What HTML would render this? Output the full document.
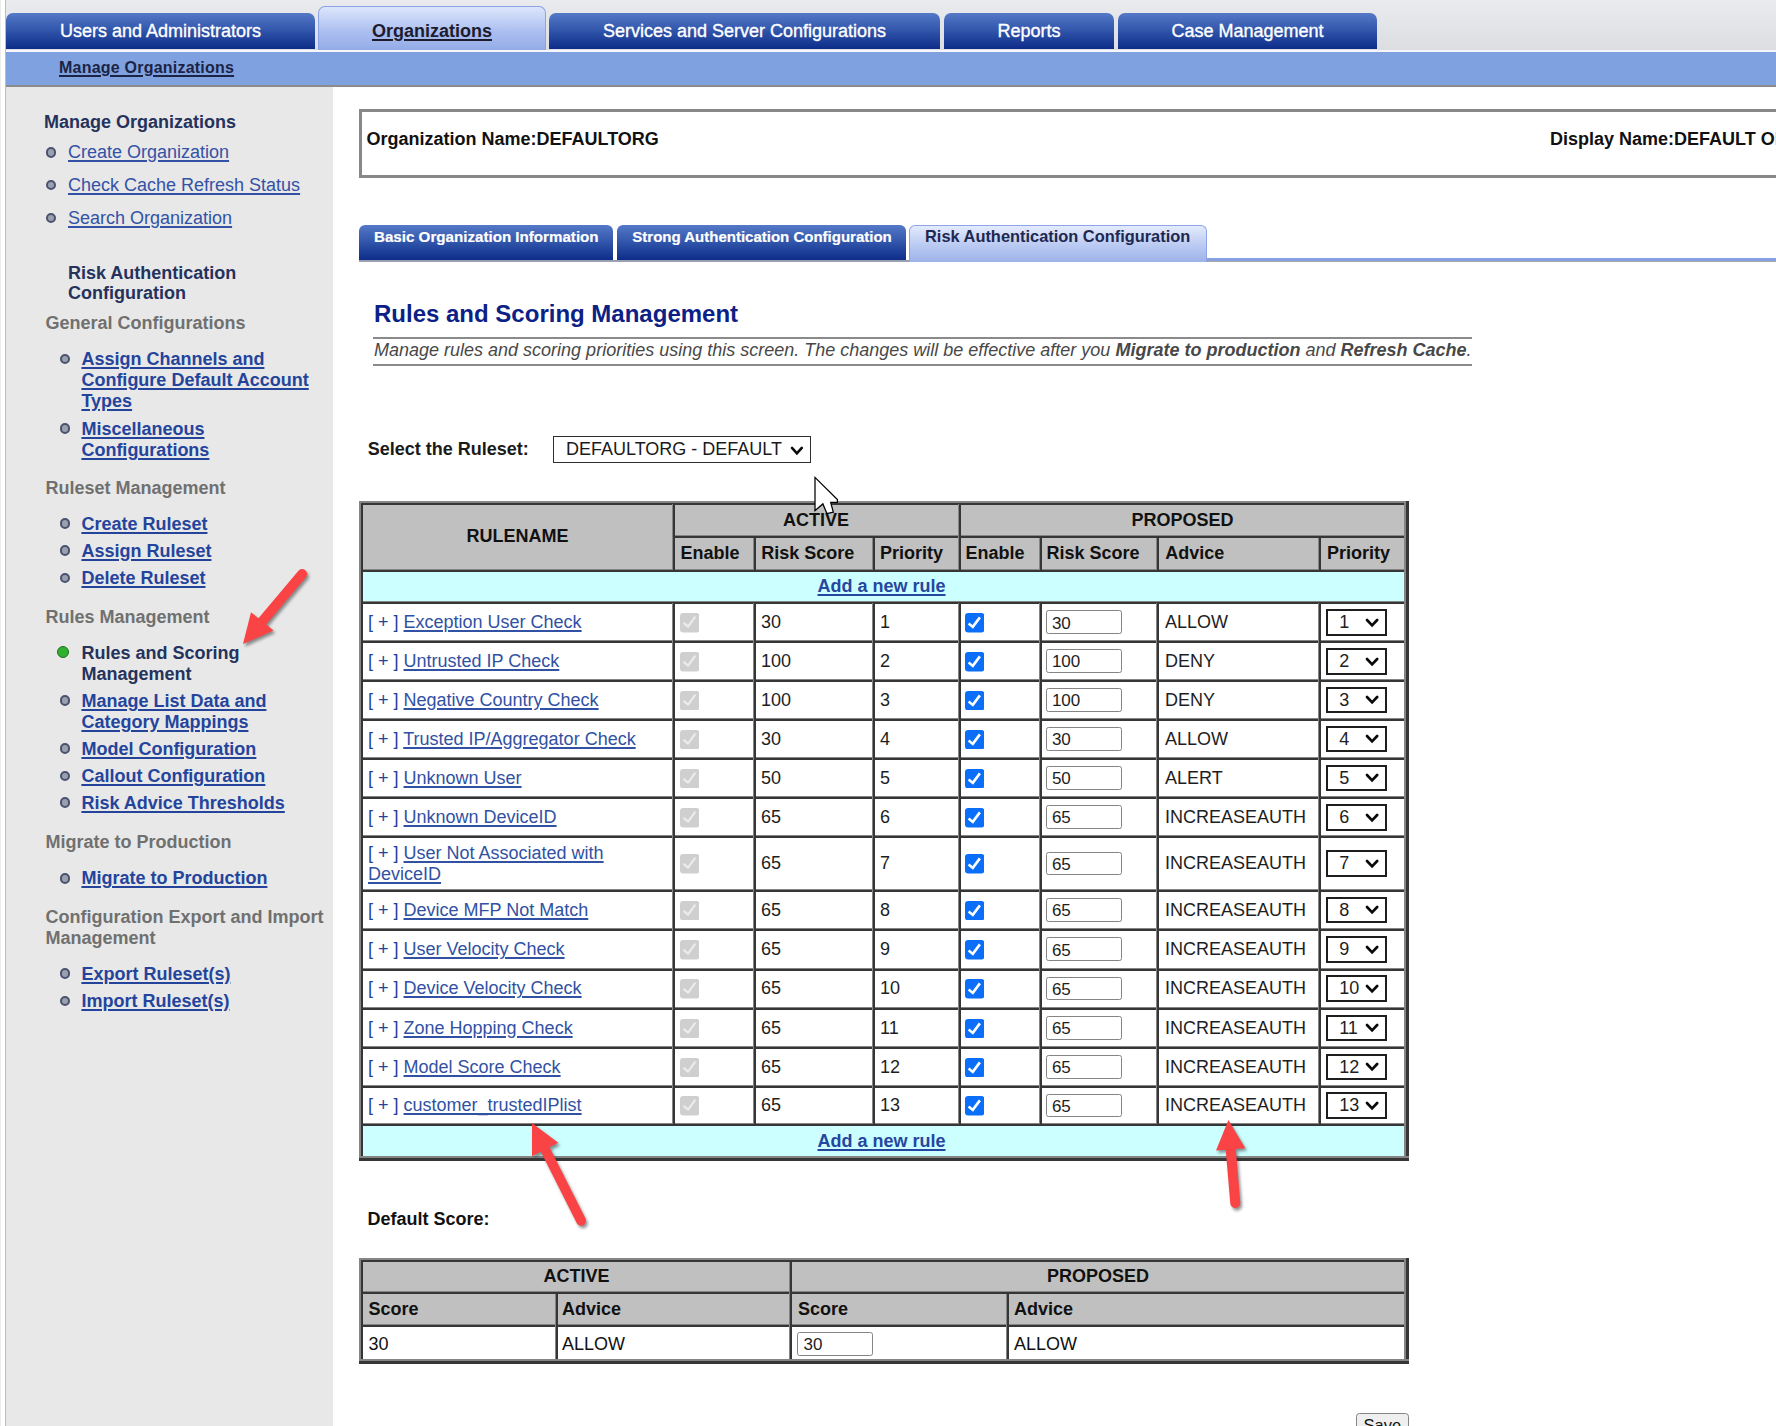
<!DOCTYPE html><html><head><meta charset="utf-8"><style>
html,body{margin:0;padding:0;}
body{width:1776px;height:1426px;overflow:hidden;position:relative;background:#fff;font-family:"Liberation Sans", sans-serif;}
div{box-sizing:border-box;}
u{text-decoration:underline;text-decoration-thickness:1.5px;text-underline-offset:1.6px;}
</style></head><body>
<div style="position:absolute;left:0.00px;top:0.00px;width:1.00px;height:1426.00px;background:#ececec;"></div>
<div style="position:absolute;left:1.00px;top:0.00px;width:4.00px;height:1426.00px;background:#ffffff;"></div>
<div style="position:absolute;left:5.00px;top:0.00px;width:1.00px;height:1426.00px;background:#bdbdbd;"></div>
<div style="position:absolute;left:6.00px;top:0.00px;width:1770.00px;height:52.00px;background:linear-gradient(#eaebef,#dcdde1);"></div>
<div style="position:absolute;left:6.00px;top:49.50px;width:1770.00px;height:2.50px;background:#f5f5fb;"></div>
<div style="position:absolute;left:6.00px;top:52.00px;width:1770.00px;height:33.00px;background:#80a1e0;"></div>
<div style="position:absolute;left:6.00px;top:85.00px;width:1770.00px;height:1.50px;background:#8c8c8c;"></div>
<div style="position:absolute;left:6px;top:13px;width:309px;height:36px;border-radius:7px 7px 0 0;background:linear-gradient(#5479c7,#3358ad 45%,#0d2c89);"></div>
<div style="position:absolute;left:6.00px;top:21.00px;width:309px;text-align:center;font-size:18px;line-height:20px;font-weight:normal;font-style:normal;color:#ffffff;white-space:nowrap;-webkit-text-stroke:0.35px #fff;">Users and Administrators</div>
<div style="position:absolute;left:318px;top:5.5px;width:228px;height:44px;border:1px solid #8aa2e6;border-bottom:none;border-radius:7px 7px 0 0;background:linear-gradient(#dce6fb,#aabdf0 60%,#93ace6);"></div>
<div style="position:absolute;left:318.00px;top:21.00px;width:228px;text-align:center;font-size:18px;line-height:20px;font-weight:bold;font-style:normal;color:#1c1c2c;white-space:nowrap;"><u style="text-decoration-thickness:1.5px">Organizations</u></div>
<div style="position:absolute;left:549px;top:13px;width:391px;height:36px;border-radius:7px 7px 0 0;background:linear-gradient(#5479c7,#3358ad 45%,#0d2c89);"></div>
<div style="position:absolute;left:549.00px;top:21.00px;width:391px;text-align:center;font-size:18px;line-height:20px;font-weight:normal;font-style:normal;color:#ffffff;white-space:nowrap;-webkit-text-stroke:0.35px #fff;">Services and Server Configurations</div>
<div style="position:absolute;left:944px;top:13px;width:170px;height:36px;border-radius:7px 7px 0 0;background:linear-gradient(#5479c7,#3358ad 45%,#0d2c89);"></div>
<div style="position:absolute;left:944.00px;top:21.00px;width:170px;text-align:center;font-size:18px;line-height:20px;font-weight:normal;font-style:normal;color:#ffffff;white-space:nowrap;-webkit-text-stroke:0.35px #fff;">Reports</div>
<div style="position:absolute;left:1118px;top:13px;width:259px;height:36px;border-radius:7px 7px 0 0;background:linear-gradient(#5479c7,#3358ad 45%,#0d2c89);"></div>
<div style="position:absolute;left:1118.00px;top:21.00px;width:259px;text-align:center;font-size:18px;line-height:20px;font-weight:normal;font-style:normal;color:#ffffff;white-space:nowrap;-webkit-text-stroke:0.35px #fff;">Case Management</div>
<div style="position:absolute;left:59.00px;top:59.00px;font-size:16px;line-height:17px;font-weight:bold;font-style:normal;color:#1b2444;white-space:nowrap;letter-spacing:0.22px;"><u>Manage Organizations</u></div>
<div style="position:absolute;left:6.00px;top:86.50px;width:327.00px;height:1339.50px;background:#e8e8e8;"></div>
<div style="position:absolute;left:44.00px;top:112.00px;font-size:18px;line-height:20px;font-weight:bold;font-style:normal;color:#24325c;white-space:nowrap;">Manage Organizations</div>
<div style="position:absolute;left:45.95px;top:147.05px;width:10.5px;height:10.5px;border-radius:50%;background:#9aa0ad;border:2px solid #4a5270;"></div>
<div style="position:absolute;left:68.00px;top:142.30px;font-size:18px;line-height:20px;font-weight:normal;font-style:normal;color:#3352a6;white-space:nowrap;"><u>Create Organization</u></div>
<div style="position:absolute;left:45.95px;top:179.95px;width:10.5px;height:10.5px;border-radius:50%;background:#9aa0ad;border:2px solid #4a5270;"></div>
<div style="position:absolute;left:68.00px;top:175.20px;font-size:18px;line-height:20px;font-weight:normal;font-style:normal;color:#3352a6;white-space:nowrap;"><u>Check Cache Refresh Status</u></div>
<div style="position:absolute;left:45.95px;top:212.95px;width:10.5px;height:10.5px;border-radius:50%;background:#9aa0ad;border:2px solid #4a5270;"></div>
<div style="position:absolute;left:68.00px;top:208.20px;font-size:18px;line-height:20px;font-weight:normal;font-style:normal;color:#3352a6;white-space:nowrap;"><u>Search Organization</u></div>
<div style="position:absolute;left:68.00px;top:262.70px;font-size:18px;line-height:20px;font-weight:bold;font-style:normal;color:#24325c;white-space:nowrap;">Risk Authentication</div>
<div style="position:absolute;left:68.00px;top:283.40px;font-size:18px;line-height:20px;font-weight:bold;font-style:normal;color:#24325c;white-space:nowrap;">Configuration</div>
<div style="position:absolute;left:45.50px;top:313.00px;font-size:18px;line-height:20px;font-weight:bold;font-style:normal;color:#707070;white-space:nowrap;">General Configurations</div>
<div style="position:absolute;left:59.75px;top:353.75px;width:10.5px;height:10.5px;border-radius:50%;background:#9aa0ad;border:2px solid #4a5270;"></div>
<div style="position:absolute;left:81.40px;top:348.90px;font-size:18px;line-height:20px;font-weight:bold;font-style:normal;color:#24449c;white-space:nowrap;"><u>Assign Channels and</u></div>
<div style="position:absolute;left:81.40px;top:370.00px;font-size:18px;line-height:20px;font-weight:bold;font-style:normal;color:#24449c;white-space:nowrap;"><u>Configure Default Account</u></div>
<div style="position:absolute;left:81.40px;top:391.00px;font-size:18px;line-height:20px;font-weight:bold;font-style:normal;color:#24449c;white-space:nowrap;"><u>Types</u></div>
<div style="position:absolute;left:59.75px;top:423.45px;width:10.5px;height:10.5px;border-radius:50%;background:#9aa0ad;border:2px solid #4a5270;"></div>
<div style="position:absolute;left:81.40px;top:418.70px;font-size:18px;line-height:20px;font-weight:bold;font-style:normal;color:#24449c;white-space:nowrap;"><u>Miscellaneous</u></div>
<div style="position:absolute;left:81.40px;top:439.70px;font-size:18px;line-height:20px;font-weight:bold;font-style:normal;color:#24449c;white-space:nowrap;"><u>Configurations</u></div>
<div style="position:absolute;left:45.50px;top:478.00px;font-size:18px;line-height:20px;font-weight:bold;font-style:normal;color:#707070;white-space:nowrap;">Ruleset Management</div>
<div style="position:absolute;left:59.75px;top:518.45px;width:10.5px;height:10.5px;border-radius:50%;background:#9aa0ad;border:2px solid #4a5270;"></div>
<div style="position:absolute;left:81.40px;top:513.70px;font-size:18px;line-height:20px;font-weight:bold;font-style:normal;color:#24449c;white-space:nowrap;"><u>Create Ruleset</u></div>
<div style="position:absolute;left:59.75px;top:545.25px;width:10.5px;height:10.5px;border-radius:50%;background:#9aa0ad;border:2px solid #4a5270;"></div>
<div style="position:absolute;left:81.40px;top:540.50px;font-size:18px;line-height:20px;font-weight:bold;font-style:normal;color:#24449c;white-space:nowrap;"><u>Assign Ruleset</u></div>
<div style="position:absolute;left:59.75px;top:572.95px;width:10.5px;height:10.5px;border-radius:50%;background:#9aa0ad;border:2px solid #4a5270;"></div>
<div style="position:absolute;left:81.40px;top:568.20px;font-size:18px;line-height:20px;font-weight:bold;font-style:normal;color:#24449c;white-space:nowrap;"><u>Delete Ruleset</u></div>
<div style="position:absolute;left:45.50px;top:606.50px;font-size:18px;line-height:20px;font-weight:bold;font-style:normal;color:#707070;white-space:nowrap;">Rules Management</div>
<div style="position:absolute;left:56.70px;top:645.70px;width:12.6px;height:12.6px;border-radius:50%;background:#2fb02f;border:1.8px solid #1f6f1f;"></div>
<div style="position:absolute;left:81.40px;top:643.00px;font-size:18px;line-height:20px;font-weight:bold;font-style:normal;color:#24325c;white-space:nowrap;">Rules and Scoring</div>
<div style="position:absolute;left:81.40px;top:664.00px;font-size:18px;line-height:20px;font-weight:bold;font-style:normal;color:#24325c;white-space:nowrap;">Management</div>
<div style="position:absolute;left:59.75px;top:695.45px;width:10.5px;height:10.5px;border-radius:50%;background:#9aa0ad;border:2px solid #4a5270;"></div>
<div style="position:absolute;left:81.40px;top:690.70px;font-size:18px;line-height:20px;font-weight:bold;font-style:normal;color:#24449c;white-space:nowrap;"><u>Manage List Data and</u></div>
<div style="position:absolute;left:81.40px;top:711.80px;font-size:18px;line-height:20px;font-weight:bold;font-style:normal;color:#24449c;white-space:nowrap;"><u>Category Mappings</u></div>
<div style="position:absolute;left:59.75px;top:743.45px;width:10.5px;height:10.5px;border-radius:50%;background:#9aa0ad;border:2px solid #4a5270;"></div>
<div style="position:absolute;left:81.40px;top:738.70px;font-size:18px;line-height:20px;font-weight:bold;font-style:normal;color:#24449c;white-space:nowrap;"><u>Model Configuration</u></div>
<div style="position:absolute;left:59.75px;top:770.95px;width:10.5px;height:10.5px;border-radius:50%;background:#9aa0ad;border:2px solid #4a5270;"></div>
<div style="position:absolute;left:81.40px;top:766.20px;font-size:18px;line-height:20px;font-weight:bold;font-style:normal;color:#24449c;white-space:nowrap;"><u>Callout Configuration</u></div>
<div style="position:absolute;left:59.75px;top:797.45px;width:10.5px;height:10.5px;border-radius:50%;background:#9aa0ad;border:2px solid #4a5270;"></div>
<div style="position:absolute;left:81.40px;top:792.70px;font-size:18px;line-height:20px;font-weight:bold;font-style:normal;color:#24449c;white-space:nowrap;"><u>Risk Advice Thresholds</u></div>
<div style="position:absolute;left:45.50px;top:832.00px;font-size:18px;line-height:20px;font-weight:bold;font-style:normal;color:#707070;white-space:nowrap;">Migrate to Production</div>
<div style="position:absolute;left:59.75px;top:873.05px;width:10.5px;height:10.5px;border-radius:50%;background:#9aa0ad;border:2px solid #4a5270;"></div>
<div style="position:absolute;left:81.40px;top:868.30px;font-size:18px;line-height:20px;font-weight:bold;font-style:normal;color:#24449c;white-space:nowrap;"><u>Migrate to Production</u></div>
<div style="position:absolute;left:45.50px;top:906.60px;font-size:18px;line-height:20px;font-weight:bold;font-style:normal;color:#707070;white-space:nowrap;">Configuration Export and Import</div>
<div style="position:absolute;left:45.50px;top:928.20px;font-size:18px;line-height:20px;font-weight:bold;font-style:normal;color:#707070;white-space:nowrap;">Management</div>
<div style="position:absolute;left:59.75px;top:968.25px;width:10.5px;height:10.5px;border-radius:50%;background:#9aa0ad;border:2px solid #4a5270;"></div>
<div style="position:absolute;left:81.40px;top:963.50px;font-size:18px;line-height:20px;font-weight:bold;font-style:normal;color:#24449c;white-space:nowrap;"><u>Export Ruleset(s)</u></div>
<div style="position:absolute;left:59.75px;top:995.75px;width:10.5px;height:10.5px;border-radius:50%;background:#9aa0ad;border:2px solid #4a5270;"></div>
<div style="position:absolute;left:81.40px;top:991.00px;font-size:18px;line-height:20px;font-weight:bold;font-style:normal;color:#24449c;white-space:nowrap;"><u>Import Ruleset(s)</u></div>
<div style="position:absolute;left:358.6px;top:109.2px;width:1430px;height:68.6px;border:3px solid #888888;"></div>
<div style="position:absolute;left:366.50px;top:129.00px;font-size:18px;line-height:20px;font-weight:bold;font-style:normal;color:#111;white-space:nowrap;">Organization Name:DEFAULTORG</div>
<div style="position:absolute;left:1550.00px;top:129.00px;font-size:18px;line-height:20px;font-weight:bold;font-style:normal;color:#111;white-space:nowrap;">Display Name:DEFAULT ORG</div>
<div style="position:absolute;left:359px;top:224.5px;width:254px;height:35.5px;border-radius:6px 6px 0 0;background:linear-gradient(#5479c7,#3358ad 45%,#0d2c89);"></div>
<div style="position:absolute;left:374.00px;top:228.20px;font-size:15.15px;line-height:17px;font-weight:bold;font-style:normal;color:#ffffff;white-space:nowrap;-webkit-text-stroke:0.2px #fff;">Basic Organization Information</div>
<div style="position:absolute;left:617px;top:224.5px;width:288.5px;height:35.5px;border-radius:6px 6px 0 0;background:linear-gradient(#5479c7,#3358ad 45%,#0d2c89);"></div>
<div style="position:absolute;left:632.30px;top:228.20px;font-size:15px;line-height:17px;font-weight:bold;font-style:normal;color:#ffffff;white-space:nowrap;-webkit-text-stroke:0.2px #fff;">Strong Authentication Configuration</div>
<div style="position:absolute;left:1207.00px;top:257.50px;width:569.00px;height:3.00px;background:#86a0e2;"></div>
<div style="position:absolute;left:1207.00px;top:260.50px;width:569.00px;height:1.00px;background:#a9a9a9;"></div>
<div style="position:absolute;left:359.00px;top:259.50px;width:850.00px;height:2.00px;background:#9aa0b0;"></div>
<div style="position:absolute;left:909px;top:224.5px;width:298px;height:37px;border:1px solid #8da5e8;border-bottom:none;border-radius:6px 6px 0 0;background:linear-gradient(#e3ebfc,#b9c9f2 55%,#9db3ea);"></div>
<div style="position:absolute;left:925.00px;top:227.20px;font-size:16.4px;line-height:18px;font-weight:bold;font-style:normal;color:#1e2850;white-space:nowrap;">Risk Authentication Configuration</div>
<div style="position:absolute;left:374.00px;top:300.00px;font-size:24px;line-height:27px;font-weight:bold;font-style:normal;color:#0c2185;white-space:nowrap;">Rules and Scoring Management</div>
<div style="position:absolute;left:373.00px;top:337.00px;width:1099.00px;height:2.00px;background:#8a8a8a;"></div>
<div style="position:absolute;left:374.00px;top:340.00px;font-size:18px;line-height:20px;font-weight:normal;font-style:italic;color:#484848;white-space:nowrap;">Manage rules and scoring priorities using this screen. The changes will be effective after you <b>Migrate to production</b> and <b>Refresh Cache</b>.</div>
<div style="position:absolute;left:373.00px;top:364.00px;width:1099.00px;height:2.00px;background:#8a8a8a;"></div>
<div style="position:absolute;left:367.70px;top:439.20px;font-size:18px;line-height:20px;font-weight:bold;font-style:normal;color:#1a1a1a;white-space:nowrap;">Select the Ruleset:</div>
<div style="position:absolute;left:553.3px;top:436.2px;width:258px;height:26.8px;border:1.8px solid #2e2e2e;background:#fff;"></div>
<div style="position:absolute;left:566.00px;top:439.00px;font-size:18px;line-height:20px;font-weight:normal;font-style:normal;color:#1a1a1a;white-space:nowrap;">DEFAULTORG - DEFAULT</div>
<svg style="position:absolute;left:787.50px;top:443.60px" width="17.80" height="13.40" viewBox="0 0 17.80 13.40"><path d="M4 4 L8.90 9.40 L13.80 4" fill="none" stroke="#0a0a0a" stroke-width="2.6" stroke-linecap="round" stroke-linejoin="miter"/></svg>
<div style="position:absolute;left:359.00px;top:501.00px;width:1049.50px;height:659.50px;background:#ffffff;"></div>
<div style="position:absolute;left:359.00px;top:501.00px;width:1049.50px;height:69.00px;background:#c0c0c0;"></div>
<div style="position:absolute;left:359.00px;top:570.00px;width:1049.50px;height:33.00px;background:#ccffff;"></div>
<div style="position:absolute;left:359.00px;top:1124.50px;width:1049.50px;height:36.00px;background:#ccffff;"></div>
<div style="position:absolute;left:359.00px;top:501.00px;width:1049.50px;height:2.00px;background:#858585;"></div>
<div style="position:absolute;left:359.00px;top:501.00px;width:2.00px;height:659.50px;background:#858585;"></div>
<div style="position:absolute;left:361.00px;top:503.00px;width:1047.50px;height:2.00px;background:#363636;"></div>
<div style="position:absolute;left:361.00px;top:503.00px;width:2.00px;height:657.50px;background:#363636;"></div>
<div style="position:absolute;left:1404.00px;top:503.00px;width:1.60px;height:657.50px;background:#858585;"></div>
<div style="position:absolute;left:1405.60px;top:501.00px;width:3.00px;height:659.50px;background:#363636;"></div>
<div style="position:absolute;left:361.00px;top:1156.30px;width:1047.50px;height:1.70px;background:#858585;"></div>
<div style="position:absolute;left:359.00px;top:1158.00px;width:1049.50px;height:2.60px;background:#363636;"></div>
<div style="position:absolute;left:673.60px;top:535.30px;width:730.40px;height:1.00px;background:#858585;"></div>
<div style="position:absolute;left:673.60px;top:536.30px;width:730.40px;height:2.00px;background:#363636;"></div>
<div style="position:absolute;left:363.00px;top:568.50px;width:1041.00px;height:1.00px;background:#858585;"></div>
<div style="position:absolute;left:363.00px;top:569.50px;width:1041.00px;height:2.00px;background:#363636;"></div>
<div style="position:absolute;left:363.00px;top:601.40px;width:1041.00px;height:1.00px;background:#858585;"></div>
<div style="position:absolute;left:363.00px;top:602.40px;width:1041.00px;height:2.00px;background:#363636;"></div>
<div style="position:absolute;left:363.00px;top:640.30px;width:1041.00px;height:1.00px;background:#858585;"></div>
<div style="position:absolute;left:363.00px;top:641.30px;width:1041.00px;height:2.00px;background:#363636;"></div>
<div style="position:absolute;left:363.00px;top:679.20px;width:1041.00px;height:1.00px;background:#858585;"></div>
<div style="position:absolute;left:363.00px;top:680.20px;width:1041.00px;height:2.00px;background:#363636;"></div>
<div style="position:absolute;left:363.00px;top:718.10px;width:1041.00px;height:1.00px;background:#858585;"></div>
<div style="position:absolute;left:363.00px;top:719.10px;width:1041.00px;height:2.00px;background:#363636;"></div>
<div style="position:absolute;left:363.00px;top:757.00px;width:1041.00px;height:1.00px;background:#858585;"></div>
<div style="position:absolute;left:363.00px;top:758.00px;width:1041.00px;height:2.00px;background:#363636;"></div>
<div style="position:absolute;left:363.00px;top:796.10px;width:1041.00px;height:1.00px;background:#858585;"></div>
<div style="position:absolute;left:363.00px;top:797.10px;width:1041.00px;height:2.00px;background:#363636;"></div>
<div style="position:absolute;left:363.00px;top:835.30px;width:1041.00px;height:1.00px;background:#858585;"></div>
<div style="position:absolute;left:363.00px;top:836.30px;width:1041.00px;height:2.00px;background:#363636;"></div>
<div style="position:absolute;left:363.00px;top:888.70px;width:1041.00px;height:1.00px;background:#858585;"></div>
<div style="position:absolute;left:363.00px;top:889.70px;width:1041.00px;height:2.00px;background:#363636;"></div>
<div style="position:absolute;left:363.00px;top:928.30px;width:1041.00px;height:1.00px;background:#858585;"></div>
<div style="position:absolute;left:363.00px;top:929.30px;width:1041.00px;height:2.00px;background:#363636;"></div>
<div style="position:absolute;left:363.00px;top:967.50px;width:1041.00px;height:1.00px;background:#858585;"></div>
<div style="position:absolute;left:363.00px;top:968.50px;width:1041.00px;height:2.00px;background:#363636;"></div>
<div style="position:absolute;left:363.00px;top:1006.70px;width:1041.00px;height:1.00px;background:#858585;"></div>
<div style="position:absolute;left:363.00px;top:1007.70px;width:1041.00px;height:2.00px;background:#363636;"></div>
<div style="position:absolute;left:363.00px;top:1045.90px;width:1041.00px;height:1.00px;background:#858585;"></div>
<div style="position:absolute;left:363.00px;top:1046.90px;width:1041.00px;height:2.00px;background:#363636;"></div>
<div style="position:absolute;left:363.00px;top:1084.70px;width:1041.00px;height:1.00px;background:#858585;"></div>
<div style="position:absolute;left:363.00px;top:1085.70px;width:1041.00px;height:2.00px;background:#363636;"></div>
<div style="position:absolute;left:363.00px;top:1123.30px;width:1041.00px;height:1.00px;background:#858585;"></div>
<div style="position:absolute;left:363.00px;top:1124.30px;width:1041.00px;height:2.00px;background:#363636;"></div>
<div style="position:absolute;left:672.10px;top:504.00px;width:1.00px;height:66.00px;background:#858585;"></div>
<div style="position:absolute;left:673.10px;top:504.00px;width:2.00px;height:66.00px;background:#363636;"></div>
<div style="position:absolute;left:957.50px;top:504.00px;width:1.00px;height:66.00px;background:#858585;"></div>
<div style="position:absolute;left:958.50px;top:504.00px;width:2.00px;height:66.00px;background:#363636;"></div>
<div style="position:absolute;left:753.10px;top:537.50px;width:1.00px;height:32.50px;background:#858585;"></div>
<div style="position:absolute;left:754.10px;top:537.50px;width:2.00px;height:32.50px;background:#363636;"></div>
<div style="position:absolute;left:871.70px;top:537.50px;width:1.00px;height:32.50px;background:#858585;"></div>
<div style="position:absolute;left:872.70px;top:537.50px;width:2.00px;height:32.50px;background:#363636;"></div>
<div style="position:absolute;left:1038.50px;top:537.50px;width:1.00px;height:32.50px;background:#858585;"></div>
<div style="position:absolute;left:1039.50px;top:537.50px;width:2.00px;height:32.50px;background:#363636;"></div>
<div style="position:absolute;left:1156.30px;top:537.50px;width:1.00px;height:32.50px;background:#858585;"></div>
<div style="position:absolute;left:1157.30px;top:537.50px;width:2.00px;height:32.50px;background:#363636;"></div>
<div style="position:absolute;left:1318.30px;top:537.50px;width:1.00px;height:32.50px;background:#858585;"></div>
<div style="position:absolute;left:1319.30px;top:537.50px;width:2.00px;height:32.50px;background:#363636;"></div>
<div style="position:absolute;left:672.10px;top:603.00px;width:1.00px;height:521.00px;background:#858585;"></div>
<div style="position:absolute;left:673.10px;top:603.00px;width:2.00px;height:521.00px;background:#363636;"></div>
<div style="position:absolute;left:753.10px;top:603.00px;width:1.00px;height:521.00px;background:#858585;"></div>
<div style="position:absolute;left:754.10px;top:603.00px;width:2.00px;height:521.00px;background:#363636;"></div>
<div style="position:absolute;left:871.70px;top:603.00px;width:1.00px;height:521.00px;background:#858585;"></div>
<div style="position:absolute;left:872.70px;top:603.00px;width:2.00px;height:521.00px;background:#363636;"></div>
<div style="position:absolute;left:957.50px;top:603.00px;width:1.00px;height:521.00px;background:#858585;"></div>
<div style="position:absolute;left:958.50px;top:603.00px;width:2.00px;height:521.00px;background:#363636;"></div>
<div style="position:absolute;left:1038.50px;top:603.00px;width:1.00px;height:521.00px;background:#858585;"></div>
<div style="position:absolute;left:1039.50px;top:603.00px;width:2.00px;height:521.00px;background:#363636;"></div>
<div style="position:absolute;left:1156.30px;top:603.00px;width:1.00px;height:521.00px;background:#858585;"></div>
<div style="position:absolute;left:1157.30px;top:603.00px;width:2.00px;height:521.00px;background:#363636;"></div>
<div style="position:absolute;left:1318.30px;top:603.00px;width:1.00px;height:521.00px;background:#858585;"></div>
<div style="position:absolute;left:1319.30px;top:603.00px;width:2.00px;height:521.00px;background:#363636;"></div>
<div style="position:absolute;left:367.50px;top:526.00px;width:300px;text-align:center;font-size:18px;line-height:20px;font-weight:bold;font-style:normal;color:#111;white-space:nowrap;">RULENAME</div>
<div style="position:absolute;left:716.00px;top:510.00px;width:200px;text-align:center;font-size:18px;line-height:20px;font-weight:bold;font-style:normal;color:#111;white-space:nowrap;">ACTIVE</div>
<div style="position:absolute;left:1032.50px;top:510.00px;width:300px;text-align:center;font-size:18px;line-height:20px;font-weight:bold;font-style:normal;color:#111;white-space:nowrap;">PROPOSED</div>
<div style="position:absolute;left:680.50px;top:543.00px;font-size:18px;line-height:20px;font-weight:bold;font-style:normal;color:#111;white-space:nowrap;">Enable</div>
<div style="position:absolute;left:761.30px;top:543.00px;font-size:18px;line-height:20px;font-weight:bold;font-style:normal;color:#111;white-space:nowrap;">Risk Score</div>
<div style="position:absolute;left:880.00px;top:543.00px;font-size:18px;line-height:20px;font-weight:bold;font-style:normal;color:#111;white-space:nowrap;">Priority</div>
<div style="position:absolute;left:965.50px;top:543.00px;font-size:18px;line-height:20px;font-weight:bold;font-style:normal;color:#111;white-space:nowrap;">Enable</div>
<div style="position:absolute;left:1046.50px;top:543.00px;font-size:18px;line-height:20px;font-weight:bold;font-style:normal;color:#111;white-space:nowrap;">Risk Score</div>
<div style="position:absolute;left:1165.30px;top:543.00px;font-size:18px;line-height:20px;font-weight:bold;font-style:normal;color:#111;white-space:nowrap;">Advice</div>
<div style="position:absolute;left:1327.00px;top:543.00px;font-size:18px;line-height:20px;font-weight:bold;font-style:normal;color:#111;white-space:nowrap;">Priority</div>
<div style="position:absolute;left:731.50px;top:575.50px;width:300px;text-align:center;font-size:18px;line-height:20px;font-weight:bold;font-style:normal;color:#2646a0;white-space:nowrap;"><u>Add a new rule</u></div>
<div style="position:absolute;left:731.50px;top:1131.00px;width:300px;text-align:center;font-size:18px;line-height:20px;font-weight:bold;font-style:normal;color:#2646a0;white-space:nowrap;"><u>Add a new rule</u></div>
<div style="position:absolute;left:368.00px;top:612.15px;font-size:18px;line-height:20px;font-weight:normal;font-style:normal;color:#3151a3;white-space:nowrap;"><span style="color:#23429a">[ + ]</span> <u>Exception User Check</u></div>
<svg style="position:absolute;left:679.6px;top:613.1499999999999px" width="19.5" height="19.5" viewBox="0 0 19.5 19.5"><rect x="0" y="0" width="19.5" height="19.5" rx="3.2" fill="#cfcfcf"/><path d="M4.2 10.3 L8.1 13.6 L14.8 4.4" fill="none" stroke="#ececec" stroke-width="2.2" stroke-linecap="round" stroke-linejoin="round"/></svg>
<div style="position:absolute;left:761.00px;top:612.15px;font-size:18px;line-height:20px;font-weight:normal;font-style:normal;color:#1e1e1e;white-space:nowrap;">30</div>
<div style="position:absolute;left:880.00px;top:612.15px;font-size:18px;line-height:20px;font-weight:normal;font-style:normal;color:#1e1e1e;white-space:nowrap;">1</div>
<svg style="position:absolute;left:964.6px;top:613.1499999999999px" width="19.5" height="19.5" viewBox="0 0 19.5 19.5"><rect x="0" y="0" width="19.5" height="19.5" rx="3.2" fill="#0b6ef8"/><path d="M3.6 10.6 L7.8 13.9 L14.9 4.4" fill="none" stroke="#fff" stroke-width="2.6" stroke-linecap="butt" stroke-linejoin="miter"/></svg>
<div style="position:absolute;left:1045.6px;top:610.3499999999999px;width:76.5px;height:23.8px;border:1.5px solid #858585;border-radius:2.5px;background:#fff;"></div>
<div style="position:absolute;left:1051.90px;top:613.55px;font-size:17px;line-height:19px;font-weight:normal;font-style:normal;color:#1e1e1e;white-space:nowrap;">30</div>
<div style="position:absolute;left:1165.00px;top:612.15px;font-size:18px;line-height:20px;font-weight:normal;font-style:normal;color:#1e1e1e;white-space:nowrap;">ALLOW</div>
<div style="position:absolute;left:1326.2px;top:609.1499999999999px;width:61px;height:26.5px;border:2px solid #1e1e1e;background:#fff;"></div>
<div style="position:absolute;left:1339.20px;top:612.15px;font-size:18px;line-height:20px;font-weight:normal;font-style:normal;color:#1e1e1e;white-space:nowrap;">1</div>
<svg style="position:absolute;left:1363.40px;top:615.65px" width="18.20" height="13.40" viewBox="0 0 18.20 13.40"><path d="M4 4 L9.10 9.40 L14.20 4" fill="none" stroke="#0a0a0a" stroke-width="2.7" stroke-linecap="round" stroke-linejoin="miter"/></svg>
<div style="position:absolute;left:368.00px;top:651.05px;font-size:18px;line-height:20px;font-weight:normal;font-style:normal;color:#3151a3;white-space:nowrap;"><span style="color:#23429a">[ + ]</span> <u>Untrusted IP Check</u></div>
<svg style="position:absolute;left:679.6px;top:652.05px" width="19.5" height="19.5" viewBox="0 0 19.5 19.5"><rect x="0" y="0" width="19.5" height="19.5" rx="3.2" fill="#cfcfcf"/><path d="M4.2 10.3 L8.1 13.6 L14.8 4.4" fill="none" stroke="#ececec" stroke-width="2.2" stroke-linecap="round" stroke-linejoin="round"/></svg>
<div style="position:absolute;left:761.00px;top:651.05px;font-size:18px;line-height:20px;font-weight:normal;font-style:normal;color:#1e1e1e;white-space:nowrap;">100</div>
<div style="position:absolute;left:880.00px;top:651.05px;font-size:18px;line-height:20px;font-weight:normal;font-style:normal;color:#1e1e1e;white-space:nowrap;">2</div>
<svg style="position:absolute;left:964.6px;top:652.05px" width="19.5" height="19.5" viewBox="0 0 19.5 19.5"><rect x="0" y="0" width="19.5" height="19.5" rx="3.2" fill="#0b6ef8"/><path d="M3.6 10.6 L7.8 13.9 L14.9 4.4" fill="none" stroke="#fff" stroke-width="2.6" stroke-linecap="butt" stroke-linejoin="miter"/></svg>
<div style="position:absolute;left:1045.6px;top:649.25px;width:76.5px;height:23.8px;border:1.5px solid #858585;border-radius:2.5px;background:#fff;"></div>
<div style="position:absolute;left:1051.90px;top:652.45px;font-size:17px;line-height:19px;font-weight:normal;font-style:normal;color:#1e1e1e;white-space:nowrap;">100</div>
<div style="position:absolute;left:1165.00px;top:651.05px;font-size:18px;line-height:20px;font-weight:normal;font-style:normal;color:#1e1e1e;white-space:nowrap;">DENY</div>
<div style="position:absolute;left:1326.2px;top:648.05px;width:61px;height:26.5px;border:2px solid #1e1e1e;background:#fff;"></div>
<div style="position:absolute;left:1339.20px;top:651.05px;font-size:18px;line-height:20px;font-weight:normal;font-style:normal;color:#1e1e1e;white-space:nowrap;">2</div>
<svg style="position:absolute;left:1363.40px;top:654.55px" width="18.20" height="13.40" viewBox="0 0 18.20 13.40"><path d="M4 4 L9.10 9.40 L14.20 4" fill="none" stroke="#0a0a0a" stroke-width="2.7" stroke-linecap="round" stroke-linejoin="miter"/></svg>
<div style="position:absolute;left:368.00px;top:689.95px;font-size:18px;line-height:20px;font-weight:normal;font-style:normal;color:#3151a3;white-space:nowrap;"><span style="color:#23429a">[ + ]</span> <u>Negative Country Check</u></div>
<svg style="position:absolute;left:679.6px;top:690.95px" width="19.5" height="19.5" viewBox="0 0 19.5 19.5"><rect x="0" y="0" width="19.5" height="19.5" rx="3.2" fill="#cfcfcf"/><path d="M4.2 10.3 L8.1 13.6 L14.8 4.4" fill="none" stroke="#ececec" stroke-width="2.2" stroke-linecap="round" stroke-linejoin="round"/></svg>
<div style="position:absolute;left:761.00px;top:689.95px;font-size:18px;line-height:20px;font-weight:normal;font-style:normal;color:#1e1e1e;white-space:nowrap;">100</div>
<div style="position:absolute;left:880.00px;top:689.95px;font-size:18px;line-height:20px;font-weight:normal;font-style:normal;color:#1e1e1e;white-space:nowrap;">3</div>
<svg style="position:absolute;left:964.6px;top:690.95px" width="19.5" height="19.5" viewBox="0 0 19.5 19.5"><rect x="0" y="0" width="19.5" height="19.5" rx="3.2" fill="#0b6ef8"/><path d="M3.6 10.6 L7.8 13.9 L14.9 4.4" fill="none" stroke="#fff" stroke-width="2.6" stroke-linecap="butt" stroke-linejoin="miter"/></svg>
<div style="position:absolute;left:1045.6px;top:688.1500000000001px;width:76.5px;height:23.8px;border:1.5px solid #858585;border-radius:2.5px;background:#fff;"></div>
<div style="position:absolute;left:1051.90px;top:691.35px;font-size:17px;line-height:19px;font-weight:normal;font-style:normal;color:#1e1e1e;white-space:nowrap;">100</div>
<div style="position:absolute;left:1165.00px;top:689.95px;font-size:18px;line-height:20px;font-weight:normal;font-style:normal;color:#1e1e1e;white-space:nowrap;">DENY</div>
<div style="position:absolute;left:1326.2px;top:686.95px;width:61px;height:26.5px;border:2px solid #1e1e1e;background:#fff;"></div>
<div style="position:absolute;left:1339.20px;top:689.95px;font-size:18px;line-height:20px;font-weight:normal;font-style:normal;color:#1e1e1e;white-space:nowrap;">3</div>
<svg style="position:absolute;left:1363.40px;top:693.45px" width="18.20" height="13.40" viewBox="0 0 18.20 13.40"><path d="M4 4 L9.10 9.40 L14.20 4" fill="none" stroke="#0a0a0a" stroke-width="2.7" stroke-linecap="round" stroke-linejoin="miter"/></svg>
<div style="position:absolute;left:368.00px;top:728.85px;font-size:18px;line-height:20px;font-weight:normal;font-style:normal;color:#3151a3;white-space:nowrap;"><span style="color:#23429a">[ + ]</span> <u>Trusted IP/Aggregator Check</u></div>
<svg style="position:absolute;left:679.6px;top:729.8499999999999px" width="19.5" height="19.5" viewBox="0 0 19.5 19.5"><rect x="0" y="0" width="19.5" height="19.5" rx="3.2" fill="#cfcfcf"/><path d="M4.2 10.3 L8.1 13.6 L14.8 4.4" fill="none" stroke="#ececec" stroke-width="2.2" stroke-linecap="round" stroke-linejoin="round"/></svg>
<div style="position:absolute;left:761.00px;top:728.85px;font-size:18px;line-height:20px;font-weight:normal;font-style:normal;color:#1e1e1e;white-space:nowrap;">30</div>
<div style="position:absolute;left:880.00px;top:728.85px;font-size:18px;line-height:20px;font-weight:normal;font-style:normal;color:#1e1e1e;white-space:nowrap;">4</div>
<svg style="position:absolute;left:964.6px;top:729.8499999999999px" width="19.5" height="19.5" viewBox="0 0 19.5 19.5"><rect x="0" y="0" width="19.5" height="19.5" rx="3.2" fill="#0b6ef8"/><path d="M3.6 10.6 L7.8 13.9 L14.9 4.4" fill="none" stroke="#fff" stroke-width="2.6" stroke-linecap="butt" stroke-linejoin="miter"/></svg>
<div style="position:absolute;left:1045.6px;top:727.05px;width:76.5px;height:23.8px;border:1.5px solid #858585;border-radius:2.5px;background:#fff;"></div>
<div style="position:absolute;left:1051.90px;top:730.25px;font-size:17px;line-height:19px;font-weight:normal;font-style:normal;color:#1e1e1e;white-space:nowrap;">30</div>
<div style="position:absolute;left:1165.00px;top:728.85px;font-size:18px;line-height:20px;font-weight:normal;font-style:normal;color:#1e1e1e;white-space:nowrap;">ALLOW</div>
<div style="position:absolute;left:1326.2px;top:725.8499999999999px;width:61px;height:26.5px;border:2px solid #1e1e1e;background:#fff;"></div>
<div style="position:absolute;left:1339.20px;top:728.85px;font-size:18px;line-height:20px;font-weight:normal;font-style:normal;color:#1e1e1e;white-space:nowrap;">4</div>
<svg style="position:absolute;left:1363.40px;top:732.35px" width="18.20" height="13.40" viewBox="0 0 18.20 13.40"><path d="M4 4 L9.10 9.40 L14.20 4" fill="none" stroke="#0a0a0a" stroke-width="2.7" stroke-linecap="round" stroke-linejoin="miter"/></svg>
<div style="position:absolute;left:368.00px;top:767.85px;font-size:18px;line-height:20px;font-weight:normal;font-style:normal;color:#3151a3;white-space:nowrap;"><span style="color:#23429a">[ + ]</span> <u>Unknown User</u></div>
<svg style="position:absolute;left:679.6px;top:768.8499999999999px" width="19.5" height="19.5" viewBox="0 0 19.5 19.5"><rect x="0" y="0" width="19.5" height="19.5" rx="3.2" fill="#cfcfcf"/><path d="M4.2 10.3 L8.1 13.6 L14.8 4.4" fill="none" stroke="#ececec" stroke-width="2.2" stroke-linecap="round" stroke-linejoin="round"/></svg>
<div style="position:absolute;left:761.00px;top:767.85px;font-size:18px;line-height:20px;font-weight:normal;font-style:normal;color:#1e1e1e;white-space:nowrap;">50</div>
<div style="position:absolute;left:880.00px;top:767.85px;font-size:18px;line-height:20px;font-weight:normal;font-style:normal;color:#1e1e1e;white-space:nowrap;">5</div>
<svg style="position:absolute;left:964.6px;top:768.8499999999999px" width="19.5" height="19.5" viewBox="0 0 19.5 19.5"><rect x="0" y="0" width="19.5" height="19.5" rx="3.2" fill="#0b6ef8"/><path d="M3.6 10.6 L7.8 13.9 L14.9 4.4" fill="none" stroke="#fff" stroke-width="2.6" stroke-linecap="butt" stroke-linejoin="miter"/></svg>
<div style="position:absolute;left:1045.6px;top:766.05px;width:76.5px;height:23.8px;border:1.5px solid #858585;border-radius:2.5px;background:#fff;"></div>
<div style="position:absolute;left:1051.90px;top:769.25px;font-size:17px;line-height:19px;font-weight:normal;font-style:normal;color:#1e1e1e;white-space:nowrap;">50</div>
<div style="position:absolute;left:1165.00px;top:767.85px;font-size:18px;line-height:20px;font-weight:normal;font-style:normal;color:#1e1e1e;white-space:nowrap;">ALERT</div>
<div style="position:absolute;left:1326.2px;top:764.8499999999999px;width:61px;height:26.5px;border:2px solid #1e1e1e;background:#fff;"></div>
<div style="position:absolute;left:1339.20px;top:767.85px;font-size:18px;line-height:20px;font-weight:normal;font-style:normal;color:#1e1e1e;white-space:nowrap;">5</div>
<svg style="position:absolute;left:1363.40px;top:771.35px" width="18.20" height="13.40" viewBox="0 0 18.20 13.40"><path d="M4 4 L9.10 9.40 L14.20 4" fill="none" stroke="#0a0a0a" stroke-width="2.7" stroke-linecap="round" stroke-linejoin="miter"/></svg>
<div style="position:absolute;left:368.00px;top:807.00px;font-size:18px;line-height:20px;font-weight:normal;font-style:normal;color:#3151a3;white-space:nowrap;"><span style="color:#23429a">[ + ]</span> <u>Unknown DeviceID</u></div>
<svg style="position:absolute;left:679.6px;top:808.0px" width="19.5" height="19.5" viewBox="0 0 19.5 19.5"><rect x="0" y="0" width="19.5" height="19.5" rx="3.2" fill="#cfcfcf"/><path d="M4.2 10.3 L8.1 13.6 L14.8 4.4" fill="none" stroke="#ececec" stroke-width="2.2" stroke-linecap="round" stroke-linejoin="round"/></svg>
<div style="position:absolute;left:761.00px;top:807.00px;font-size:18px;line-height:20px;font-weight:normal;font-style:normal;color:#1e1e1e;white-space:nowrap;">65</div>
<div style="position:absolute;left:880.00px;top:807.00px;font-size:18px;line-height:20px;font-weight:normal;font-style:normal;color:#1e1e1e;white-space:nowrap;">6</div>
<svg style="position:absolute;left:964.6px;top:808.0px" width="19.5" height="19.5" viewBox="0 0 19.5 19.5"><rect x="0" y="0" width="19.5" height="19.5" rx="3.2" fill="#0b6ef8"/><path d="M3.6 10.6 L7.8 13.9 L14.9 4.4" fill="none" stroke="#fff" stroke-width="2.6" stroke-linecap="butt" stroke-linejoin="miter"/></svg>
<div style="position:absolute;left:1045.6px;top:805.2px;width:76.5px;height:23.8px;border:1.5px solid #858585;border-radius:2.5px;background:#fff;"></div>
<div style="position:absolute;left:1051.90px;top:808.40px;font-size:17px;line-height:19px;font-weight:normal;font-style:normal;color:#1e1e1e;white-space:nowrap;">65</div>
<div style="position:absolute;left:1165.00px;top:807.00px;font-size:18px;line-height:20px;font-weight:normal;font-style:normal;color:#1e1e1e;white-space:nowrap;">INCREASEAUTH</div>
<div style="position:absolute;left:1326.2px;top:804.0px;width:61px;height:26.5px;border:2px solid #1e1e1e;background:#fff;"></div>
<div style="position:absolute;left:1339.20px;top:807.00px;font-size:18px;line-height:20px;font-weight:normal;font-style:normal;color:#1e1e1e;white-space:nowrap;">6</div>
<svg style="position:absolute;left:1363.40px;top:810.50px" width="18.20" height="13.40" viewBox="0 0 18.20 13.40"><path d="M4 4 L9.10 9.40 L14.20 4" fill="none" stroke="#0a0a0a" stroke-width="2.7" stroke-linecap="round" stroke-linejoin="miter"/></svg>
<div style="position:absolute;left:368.00px;top:842.80px;font-size:18px;line-height:20px;font-weight:normal;font-style:normal;color:#3151a3;white-space:nowrap;"><span style="color:#23429a">[ + ]</span> <u>User Not Associated with</u></div>
<div style="position:absolute;left:368.00px;top:863.80px;font-size:18px;line-height:20px;font-weight:normal;font-style:normal;color:#3151a3;white-space:nowrap;"><u>DeviceID</u></div>
<svg style="position:absolute;left:679.6px;top:854.3px" width="19.5" height="19.5" viewBox="0 0 19.5 19.5"><rect x="0" y="0" width="19.5" height="19.5" rx="3.2" fill="#cfcfcf"/><path d="M4.2 10.3 L8.1 13.6 L14.8 4.4" fill="none" stroke="#ececec" stroke-width="2.2" stroke-linecap="round" stroke-linejoin="round"/></svg>
<div style="position:absolute;left:761.00px;top:853.30px;font-size:18px;line-height:20px;font-weight:normal;font-style:normal;color:#1e1e1e;white-space:nowrap;">65</div>
<div style="position:absolute;left:880.00px;top:853.30px;font-size:18px;line-height:20px;font-weight:normal;font-style:normal;color:#1e1e1e;white-space:nowrap;">7</div>
<svg style="position:absolute;left:964.6px;top:854.3px" width="19.5" height="19.5" viewBox="0 0 19.5 19.5"><rect x="0" y="0" width="19.5" height="19.5" rx="3.2" fill="#0b6ef8"/><path d="M3.6 10.6 L7.8 13.9 L14.9 4.4" fill="none" stroke="#fff" stroke-width="2.6" stroke-linecap="butt" stroke-linejoin="miter"/></svg>
<div style="position:absolute;left:1045.6px;top:851.5px;width:76.5px;height:23.8px;border:1.5px solid #858585;border-radius:2.5px;background:#fff;"></div>
<div style="position:absolute;left:1051.90px;top:854.70px;font-size:17px;line-height:19px;font-weight:normal;font-style:normal;color:#1e1e1e;white-space:nowrap;">65</div>
<div style="position:absolute;left:1165.00px;top:853.30px;font-size:18px;line-height:20px;font-weight:normal;font-style:normal;color:#1e1e1e;white-space:nowrap;">INCREASEAUTH</div>
<div style="position:absolute;left:1326.2px;top:850.3px;width:61px;height:26.5px;border:2px solid #1e1e1e;background:#fff;"></div>
<div style="position:absolute;left:1339.20px;top:853.30px;font-size:18px;line-height:20px;font-weight:normal;font-style:normal;color:#1e1e1e;white-space:nowrap;">7</div>
<svg style="position:absolute;left:1363.40px;top:856.80px" width="18.20" height="13.40" viewBox="0 0 18.20 13.40"><path d="M4 4 L9.10 9.40 L14.20 4" fill="none" stroke="#0a0a0a" stroke-width="2.7" stroke-linecap="round" stroke-linejoin="miter"/></svg>
<div style="position:absolute;left:368.00px;top:899.80px;font-size:18px;line-height:20px;font-weight:normal;font-style:normal;color:#3151a3;white-space:nowrap;"><span style="color:#23429a">[ + ]</span> <u>Device MFP Not Match</u></div>
<svg style="position:absolute;left:679.6px;top:900.8px" width="19.5" height="19.5" viewBox="0 0 19.5 19.5"><rect x="0" y="0" width="19.5" height="19.5" rx="3.2" fill="#cfcfcf"/><path d="M4.2 10.3 L8.1 13.6 L14.8 4.4" fill="none" stroke="#ececec" stroke-width="2.2" stroke-linecap="round" stroke-linejoin="round"/></svg>
<div style="position:absolute;left:761.00px;top:899.80px;font-size:18px;line-height:20px;font-weight:normal;font-style:normal;color:#1e1e1e;white-space:nowrap;">65</div>
<div style="position:absolute;left:880.00px;top:899.80px;font-size:18px;line-height:20px;font-weight:normal;font-style:normal;color:#1e1e1e;white-space:nowrap;">8</div>
<svg style="position:absolute;left:964.6px;top:900.8px" width="19.5" height="19.5" viewBox="0 0 19.5 19.5"><rect x="0" y="0" width="19.5" height="19.5" rx="3.2" fill="#0b6ef8"/><path d="M3.6 10.6 L7.8 13.9 L14.9 4.4" fill="none" stroke="#fff" stroke-width="2.6" stroke-linecap="butt" stroke-linejoin="miter"/></svg>
<div style="position:absolute;left:1045.6px;top:898.0px;width:76.5px;height:23.8px;border:1.5px solid #858585;border-radius:2.5px;background:#fff;"></div>
<div style="position:absolute;left:1051.90px;top:901.20px;font-size:17px;line-height:19px;font-weight:normal;font-style:normal;color:#1e1e1e;white-space:nowrap;">65</div>
<div style="position:absolute;left:1165.00px;top:899.80px;font-size:18px;line-height:20px;font-weight:normal;font-style:normal;color:#1e1e1e;white-space:nowrap;">INCREASEAUTH</div>
<div style="position:absolute;left:1326.2px;top:896.8px;width:61px;height:26.5px;border:2px solid #1e1e1e;background:#fff;"></div>
<div style="position:absolute;left:1339.20px;top:899.80px;font-size:18px;line-height:20px;font-weight:normal;font-style:normal;color:#1e1e1e;white-space:nowrap;">8</div>
<svg style="position:absolute;left:1363.40px;top:903.30px" width="18.20" height="13.40" viewBox="0 0 18.20 13.40"><path d="M4 4 L9.10 9.40 L14.20 4" fill="none" stroke="#0a0a0a" stroke-width="2.7" stroke-linecap="round" stroke-linejoin="miter"/></svg>
<div style="position:absolute;left:368.00px;top:939.20px;font-size:18px;line-height:20px;font-weight:normal;font-style:normal;color:#3151a3;white-space:nowrap;"><span style="color:#23429a">[ + ]</span> <u>User Velocity Check</u></div>
<svg style="position:absolute;left:679.6px;top:940.1999999999999px" width="19.5" height="19.5" viewBox="0 0 19.5 19.5"><rect x="0" y="0" width="19.5" height="19.5" rx="3.2" fill="#cfcfcf"/><path d="M4.2 10.3 L8.1 13.6 L14.8 4.4" fill="none" stroke="#ececec" stroke-width="2.2" stroke-linecap="round" stroke-linejoin="round"/></svg>
<div style="position:absolute;left:761.00px;top:939.20px;font-size:18px;line-height:20px;font-weight:normal;font-style:normal;color:#1e1e1e;white-space:nowrap;">65</div>
<div style="position:absolute;left:880.00px;top:939.20px;font-size:18px;line-height:20px;font-weight:normal;font-style:normal;color:#1e1e1e;white-space:nowrap;">9</div>
<svg style="position:absolute;left:964.6px;top:940.1999999999999px" width="19.5" height="19.5" viewBox="0 0 19.5 19.5"><rect x="0" y="0" width="19.5" height="19.5" rx="3.2" fill="#0b6ef8"/><path d="M3.6 10.6 L7.8 13.9 L14.9 4.4" fill="none" stroke="#fff" stroke-width="2.6" stroke-linecap="butt" stroke-linejoin="miter"/></svg>
<div style="position:absolute;left:1045.6px;top:937.4px;width:76.5px;height:23.8px;border:1.5px solid #858585;border-radius:2.5px;background:#fff;"></div>
<div style="position:absolute;left:1051.90px;top:940.60px;font-size:17px;line-height:19px;font-weight:normal;font-style:normal;color:#1e1e1e;white-space:nowrap;">65</div>
<div style="position:absolute;left:1165.00px;top:939.20px;font-size:18px;line-height:20px;font-weight:normal;font-style:normal;color:#1e1e1e;white-space:nowrap;">INCREASEAUTH</div>
<div style="position:absolute;left:1326.2px;top:936.1999999999999px;width:61px;height:26.5px;border:2px solid #1e1e1e;background:#fff;"></div>
<div style="position:absolute;left:1339.20px;top:939.20px;font-size:18px;line-height:20px;font-weight:normal;font-style:normal;color:#1e1e1e;white-space:nowrap;">9</div>
<svg style="position:absolute;left:1363.40px;top:942.70px" width="18.20" height="13.40" viewBox="0 0 18.20 13.40"><path d="M4 4 L9.10 9.40 L14.20 4" fill="none" stroke="#0a0a0a" stroke-width="2.7" stroke-linecap="round" stroke-linejoin="miter"/></svg>
<div style="position:absolute;left:368.00px;top:978.40px;font-size:18px;line-height:20px;font-weight:normal;font-style:normal;color:#3151a3;white-space:nowrap;"><span style="color:#23429a">[ + ]</span> <u>Device Velocity Check</u></div>
<svg style="position:absolute;left:679.6px;top:979.4px" width="19.5" height="19.5" viewBox="0 0 19.5 19.5"><rect x="0" y="0" width="19.5" height="19.5" rx="3.2" fill="#cfcfcf"/><path d="M4.2 10.3 L8.1 13.6 L14.8 4.4" fill="none" stroke="#ececec" stroke-width="2.2" stroke-linecap="round" stroke-linejoin="round"/></svg>
<div style="position:absolute;left:761.00px;top:978.40px;font-size:18px;line-height:20px;font-weight:normal;font-style:normal;color:#1e1e1e;white-space:nowrap;">65</div>
<div style="position:absolute;left:880.00px;top:978.40px;font-size:18px;line-height:20px;font-weight:normal;font-style:normal;color:#1e1e1e;white-space:nowrap;">10</div>
<svg style="position:absolute;left:964.6px;top:979.4px" width="19.5" height="19.5" viewBox="0 0 19.5 19.5"><rect x="0" y="0" width="19.5" height="19.5" rx="3.2" fill="#0b6ef8"/><path d="M3.6 10.6 L7.8 13.9 L14.9 4.4" fill="none" stroke="#fff" stroke-width="2.6" stroke-linecap="butt" stroke-linejoin="miter"/></svg>
<div style="position:absolute;left:1045.6px;top:976.6px;width:76.5px;height:23.8px;border:1.5px solid #858585;border-radius:2.5px;background:#fff;"></div>
<div style="position:absolute;left:1051.90px;top:979.80px;font-size:17px;line-height:19px;font-weight:normal;font-style:normal;color:#1e1e1e;white-space:nowrap;">65</div>
<div style="position:absolute;left:1165.00px;top:978.40px;font-size:18px;line-height:20px;font-weight:normal;font-style:normal;color:#1e1e1e;white-space:nowrap;">INCREASEAUTH</div>
<div style="position:absolute;left:1326.2px;top:975.4px;width:61px;height:26.5px;border:2px solid #1e1e1e;background:#fff;"></div>
<div style="position:absolute;left:1339.20px;top:978.40px;font-size:18px;line-height:20px;font-weight:normal;font-style:normal;color:#1e1e1e;white-space:nowrap;">10</div>
<svg style="position:absolute;left:1363.40px;top:981.90px" width="18.20" height="13.40" viewBox="0 0 18.20 13.40"><path d="M4 4 L9.10 9.40 L14.20 4" fill="none" stroke="#0a0a0a" stroke-width="2.7" stroke-linecap="round" stroke-linejoin="miter"/></svg>
<div style="position:absolute;left:368.00px;top:1017.60px;font-size:18px;line-height:20px;font-weight:normal;font-style:normal;color:#3151a3;white-space:nowrap;"><span style="color:#23429a">[ + ]</span> <u>Zone Hopping Check</u></div>
<svg style="position:absolute;left:679.6px;top:1018.6000000000001px" width="19.5" height="19.5" viewBox="0 0 19.5 19.5"><rect x="0" y="0" width="19.5" height="19.5" rx="3.2" fill="#cfcfcf"/><path d="M4.2 10.3 L8.1 13.6 L14.8 4.4" fill="none" stroke="#ececec" stroke-width="2.2" stroke-linecap="round" stroke-linejoin="round"/></svg>
<div style="position:absolute;left:761.00px;top:1017.60px;font-size:18px;line-height:20px;font-weight:normal;font-style:normal;color:#1e1e1e;white-space:nowrap;">65</div>
<div style="position:absolute;left:880.00px;top:1017.60px;font-size:18px;line-height:20px;font-weight:normal;font-style:normal;color:#1e1e1e;white-space:nowrap;">11</div>
<svg style="position:absolute;left:964.6px;top:1018.6000000000001px" width="19.5" height="19.5" viewBox="0 0 19.5 19.5"><rect x="0" y="0" width="19.5" height="19.5" rx="3.2" fill="#0b6ef8"/><path d="M3.6 10.6 L7.8 13.9 L14.9 4.4" fill="none" stroke="#fff" stroke-width="2.6" stroke-linecap="butt" stroke-linejoin="miter"/></svg>
<div style="position:absolute;left:1045.6px;top:1015.8000000000002px;width:76.5px;height:23.8px;border:1.5px solid #858585;border-radius:2.5px;background:#fff;"></div>
<div style="position:absolute;left:1051.90px;top:1019.00px;font-size:17px;line-height:19px;font-weight:normal;font-style:normal;color:#1e1e1e;white-space:nowrap;">65</div>
<div style="position:absolute;left:1165.00px;top:1017.60px;font-size:18px;line-height:20px;font-weight:normal;font-style:normal;color:#1e1e1e;white-space:nowrap;">INCREASEAUTH</div>
<div style="position:absolute;left:1326.2px;top:1014.6000000000001px;width:61px;height:26.5px;border:2px solid #1e1e1e;background:#fff;"></div>
<div style="position:absolute;left:1339.20px;top:1017.60px;font-size:18px;line-height:20px;font-weight:normal;font-style:normal;color:#1e1e1e;white-space:nowrap;">11</div>
<svg style="position:absolute;left:1363.40px;top:1021.10px" width="18.20" height="13.40" viewBox="0 0 18.20 13.40"><path d="M4 4 L9.10 9.40 L14.20 4" fill="none" stroke="#0a0a0a" stroke-width="2.7" stroke-linecap="round" stroke-linejoin="miter"/></svg>
<div style="position:absolute;left:368.00px;top:1056.60px;font-size:18px;line-height:20px;font-weight:normal;font-style:normal;color:#3151a3;white-space:nowrap;"><span style="color:#23429a">[ + ]</span> <u>Model Score Check</u></div>
<svg style="position:absolute;left:679.6px;top:1057.6000000000001px" width="19.5" height="19.5" viewBox="0 0 19.5 19.5"><rect x="0" y="0" width="19.5" height="19.5" rx="3.2" fill="#cfcfcf"/><path d="M4.2 10.3 L8.1 13.6 L14.8 4.4" fill="none" stroke="#ececec" stroke-width="2.2" stroke-linecap="round" stroke-linejoin="round"/></svg>
<div style="position:absolute;left:761.00px;top:1056.60px;font-size:18px;line-height:20px;font-weight:normal;font-style:normal;color:#1e1e1e;white-space:nowrap;">65</div>
<div style="position:absolute;left:880.00px;top:1056.60px;font-size:18px;line-height:20px;font-weight:normal;font-style:normal;color:#1e1e1e;white-space:nowrap;">12</div>
<svg style="position:absolute;left:964.6px;top:1057.6000000000001px" width="19.5" height="19.5" viewBox="0 0 19.5 19.5"><rect x="0" y="0" width="19.5" height="19.5" rx="3.2" fill="#0b6ef8"/><path d="M3.6 10.6 L7.8 13.9 L14.9 4.4" fill="none" stroke="#fff" stroke-width="2.6" stroke-linecap="butt" stroke-linejoin="miter"/></svg>
<div style="position:absolute;left:1045.6px;top:1054.8000000000002px;width:76.5px;height:23.8px;border:1.5px solid #858585;border-radius:2.5px;background:#fff;"></div>
<div style="position:absolute;left:1051.90px;top:1058.00px;font-size:17px;line-height:19px;font-weight:normal;font-style:normal;color:#1e1e1e;white-space:nowrap;">65</div>
<div style="position:absolute;left:1165.00px;top:1056.60px;font-size:18px;line-height:20px;font-weight:normal;font-style:normal;color:#1e1e1e;white-space:nowrap;">INCREASEAUTH</div>
<div style="position:absolute;left:1326.2px;top:1053.6000000000001px;width:61px;height:26.5px;border:2px solid #1e1e1e;background:#fff;"></div>
<div style="position:absolute;left:1339.20px;top:1056.60px;font-size:18px;line-height:20px;font-weight:normal;font-style:normal;color:#1e1e1e;white-space:nowrap;">12</div>
<svg style="position:absolute;left:1363.40px;top:1060.10px" width="18.20" height="13.40" viewBox="0 0 18.20 13.40"><path d="M4 4 L9.10 9.40 L14.20 4" fill="none" stroke="#0a0a0a" stroke-width="2.7" stroke-linecap="round" stroke-linejoin="miter"/></svg>
<div style="position:absolute;left:368.00px;top:1095.30px;font-size:18px;line-height:20px;font-weight:normal;font-style:normal;color:#3151a3;white-space:nowrap;"><span style="color:#23429a">[ + ]</span> <u>customer_trustedIPlist</u></div>
<svg style="position:absolute;left:679.6px;top:1096.3px" width="19.5" height="19.5" viewBox="0 0 19.5 19.5"><rect x="0" y="0" width="19.5" height="19.5" rx="3.2" fill="#cfcfcf"/><path d="M4.2 10.3 L8.1 13.6 L14.8 4.4" fill="none" stroke="#ececec" stroke-width="2.2" stroke-linecap="round" stroke-linejoin="round"/></svg>
<div style="position:absolute;left:761.00px;top:1095.30px;font-size:18px;line-height:20px;font-weight:normal;font-style:normal;color:#1e1e1e;white-space:nowrap;">65</div>
<div style="position:absolute;left:880.00px;top:1095.30px;font-size:18px;line-height:20px;font-weight:normal;font-style:normal;color:#1e1e1e;white-space:nowrap;">13</div>
<svg style="position:absolute;left:964.6px;top:1096.3px" width="19.5" height="19.5" viewBox="0 0 19.5 19.5"><rect x="0" y="0" width="19.5" height="19.5" rx="3.2" fill="#0b6ef8"/><path d="M3.6 10.6 L7.8 13.9 L14.9 4.4" fill="none" stroke="#fff" stroke-width="2.6" stroke-linecap="butt" stroke-linejoin="miter"/></svg>
<div style="position:absolute;left:1045.6px;top:1093.5px;width:76.5px;height:23.8px;border:1.5px solid #858585;border-radius:2.5px;background:#fff;"></div>
<div style="position:absolute;left:1051.90px;top:1096.70px;font-size:17px;line-height:19px;font-weight:normal;font-style:normal;color:#1e1e1e;white-space:nowrap;">65</div>
<div style="position:absolute;left:1165.00px;top:1095.30px;font-size:18px;line-height:20px;font-weight:normal;font-style:normal;color:#1e1e1e;white-space:nowrap;">INCREASEAUTH</div>
<div style="position:absolute;left:1326.2px;top:1092.3px;width:61px;height:26.5px;border:2px solid #1e1e1e;background:#fff;"></div>
<div style="position:absolute;left:1339.20px;top:1095.30px;font-size:18px;line-height:20px;font-weight:normal;font-style:normal;color:#1e1e1e;white-space:nowrap;">13</div>
<svg style="position:absolute;left:1363.40px;top:1098.80px" width="18.20" height="13.40" viewBox="0 0 18.20 13.40"><path d="M4 4 L9.10 9.40 L14.20 4" fill="none" stroke="#0a0a0a" stroke-width="2.7" stroke-linecap="round" stroke-linejoin="miter"/></svg>
<div style="position:absolute;left:367.40px;top:1209.00px;font-size:18px;line-height:20px;font-weight:bold;font-style:normal;color:#111;white-space:nowrap;">Default Score:</div>
<div style="position:absolute;left:359.00px;top:1257.50px;width:1049.50px;height:106.00px;background:#fff;"></div>
<div style="position:absolute;left:359.00px;top:1257.50px;width:1049.50px;height:68.00px;background:#c0c0c0;"></div>
<div style="position:absolute;left:359.00px;top:1257.50px;width:1049.50px;height:2.00px;background:#858585;"></div>
<div style="position:absolute;left:359.00px;top:1257.50px;width:2.00px;height:106.00px;background:#858585;"></div>
<div style="position:absolute;left:361.00px;top:1259.50px;width:1047.50px;height:2.00px;background:#363636;"></div>
<div style="position:absolute;left:361.00px;top:1259.50px;width:2.00px;height:104.00px;background:#363636;"></div>
<div style="position:absolute;left:1404.00px;top:1259.50px;width:1.60px;height:104.00px;background:#858585;"></div>
<div style="position:absolute;left:1405.60px;top:1257.50px;width:3.00px;height:106.00px;background:#363636;"></div>
<div style="position:absolute;left:361.00px;top:1359.30px;width:1047.50px;height:1.70px;background:#858585;"></div>
<div style="position:absolute;left:359.00px;top:1361.00px;width:1049.50px;height:2.60px;background:#363636;"></div>
<div style="position:absolute;left:363.00px;top:1291.30px;width:1041.00px;height:1.00px;background:#858585;"></div>
<div style="position:absolute;left:363.00px;top:1292.30px;width:1041.00px;height:2.00px;background:#363636;"></div>
<div style="position:absolute;left:363.00px;top:1324.00px;width:1041.00px;height:1.00px;background:#858585;"></div>
<div style="position:absolute;left:363.00px;top:1325.00px;width:1041.00px;height:2.00px;background:#363636;"></div>
<div style="position:absolute;left:789.00px;top:1261.50px;width:1.00px;height:97.50px;background:#858585;"></div>
<div style="position:absolute;left:790.00px;top:1261.50px;width:2.00px;height:97.50px;background:#363636;"></div>
<div style="position:absolute;left:554.80px;top:1293.50px;width:1.00px;height:65.50px;background:#858585;"></div>
<div style="position:absolute;left:555.80px;top:1293.50px;width:2.00px;height:65.50px;background:#363636;"></div>
<div style="position:absolute;left:1006.20px;top:1293.50px;width:1.00px;height:65.50px;background:#858585;"></div>
<div style="position:absolute;left:1007.20px;top:1293.50px;width:2.00px;height:65.50px;background:#363636;"></div>
<div style="position:absolute;left:426.50px;top:1266.40px;width:300px;text-align:center;font-size:18px;line-height:20px;font-weight:bold;font-style:normal;color:#111;white-space:nowrap;">ACTIVE</div>
<div style="position:absolute;left:948.00px;top:1266.40px;width:300px;text-align:center;font-size:18px;line-height:20px;font-weight:bold;font-style:normal;color:#111;white-space:nowrap;">PROPOSED</div>
<div style="position:absolute;left:368.50px;top:1298.80px;font-size:18px;line-height:20px;font-weight:bold;font-style:normal;color:#111;white-space:nowrap;">Score</div>
<div style="position:absolute;left:562.00px;top:1298.80px;font-size:18px;line-height:20px;font-weight:bold;font-style:normal;color:#111;white-space:nowrap;">Advice</div>
<div style="position:absolute;left:798.00px;top:1298.80px;font-size:18px;line-height:20px;font-weight:bold;font-style:normal;color:#111;white-space:nowrap;">Score</div>
<div style="position:absolute;left:1014.00px;top:1298.80px;font-size:18px;line-height:20px;font-weight:bold;font-style:normal;color:#111;white-space:nowrap;">Advice</div>
<div style="position:absolute;left:368.50px;top:1334.00px;font-size:18px;line-height:20px;font-weight:normal;font-style:normal;color:#111;white-space:nowrap;">30</div>
<div style="position:absolute;left:562.00px;top:1334.00px;font-size:18px;line-height:20px;font-weight:normal;font-style:normal;color:#111;white-space:nowrap;">ALLOW</div>
<div style="position:absolute;left:797.3px;top:1332px;width:75.5px;height:23.5px;border:1.5px solid #858585;border-radius:2.5px;background:#fff;"></div>
<div style="position:absolute;left:803.60px;top:1335.20px;font-size:17px;line-height:19px;font-weight:normal;font-style:normal;color:#1e1e1e;white-space:nowrap;">30</div>
<div style="position:absolute;left:1014.00px;top:1334.00px;font-size:18px;line-height:20px;font-weight:normal;font-style:normal;color:#111;white-space:nowrap;">ALLOW</div>
<div style="position:absolute;left:1356px;top:1412.8px;width:52.5px;height:30px;border:1.5px solid #858585;border-radius:3.5px;background:#efefef;"></div>
<div style="position:absolute;left:1363.50px;top:1416.00px;font-size:16.5px;line-height:18px;font-weight:normal;font-style:normal;color:#111;white-space:nowrap;">Save</div>
<svg style="position:absolute;left:0;top:0" width="0" height="0"><defs><filter id="ashadow" x="-30%" y="-30%" width="160%" height="160%"><feGaussianBlur stdDeviation="1.6"/></filter></defs></svg>
<svg style="position:absolute;left:228.00px;top:558.70px;overflow:visible" width="89.20" height="100.10"><g transform="translate(1.8,2.6)" opacity="0.55" filter="url(#ashadow)"><line x1="74.20" y1="15.00" x2="29.44" y2="68.00" stroke="#3a3a3a" stroke-width="9.8" stroke-linecap="round"/><path d="M15.00 85.10 L23.00 53.20 L45.50 71.40 Z" fill="#3a3a3a"/></g><line x1="74.20" y1="15.00" x2="29.44" y2="68.00" stroke="#fa4345" stroke-width="9.8" stroke-linecap="round"/><path d="M15.00 85.10 L23.00 53.20 L45.50 71.40 Z" fill="#fa4345"/></svg>
<svg style="position:absolute;left:517.10px;top:1108.10px;overflow:visible" width="79.10" height="127.80"><g transform="translate(1.8,2.6)" opacity="0.55" filter="url(#ashadow)"><line x1="64.10" y1="112.80" x2="24.86" y2="34.91" stroke="#3a3a3a" stroke-width="9.8" stroke-linecap="round"/><path d="M15.00 15.00 L41.30 34.80 L15.00 48.30 Z" fill="#3a3a3a"/></g><line x1="64.10" y1="112.80" x2="24.86" y2="34.91" stroke="#fa4345" stroke-width="9.8" stroke-linecap="round"/><path d="M15.00 15.00 L41.30 34.80 L15.00 48.30 Z" fill="#fa4345"/></svg>
<svg style="position:absolute;left:1200.80px;top:1105.40px;overflow:visible" width="59.30" height="113.00"><g transform="translate(1.8,2.6)" opacity="0.55" filter="url(#ashadow)"><line x1="34.30" y1="98.00" x2="29.09" y2="37.01" stroke="#3a3a3a" stroke-width="10" stroke-linecap="round"/><path d="M27.40 15.00 L15.00 45.50 L44.30 43.20 Z" fill="#3a3a3a"/></g><line x1="34.30" y1="98.00" x2="29.09" y2="37.01" stroke="#fa4345" stroke-width="10" stroke-linecap="round"/><path d="M27.40 15.00 L15.00 45.50 L44.30 43.20 Z" fill="#fa4345"/></svg>
<svg style="position:absolute;left:0;top:0;overflow:visible" width="1776" height="1426"><path d="M815 477.4 L815 510.6 L822.9 503.9 L826.9 513.6 L833.3 512.2 L830.7 502.4 L837.4 502.4 L837.4 499.6 Z" fill="#fff" stroke="#000" stroke-width="1.25" stroke-linejoin="miter"/></svg>
</body></html>
